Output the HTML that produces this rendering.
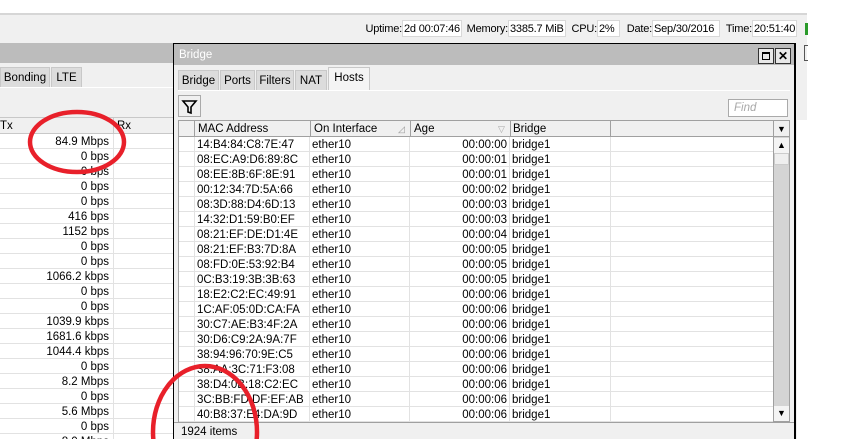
<!DOCTYPE html>
<html><head><meta charset="utf-8"><style>
*{margin:0;padding:0;box-sizing:border-box}
html,body{width:849px;height:439px;overflow:hidden}
body{background:#fff;font-family:"Liberation Sans",Tahoma,sans-serif;font-size:11.5px;color:#000;position:relative}
.a{position:absolute}
.box{position:absolute;top:20px;height:17px;background:#fff;border:1px solid #d8d8d8;padding:1px 1px;line-height:15px;white-space:nowrap;font-size:11px;letter-spacing:-0.2px;overflow:hidden}
.lbl{position:absolute;top:22px;line-height:15px;text-align:right;white-space:nowrap;font-size:11px;letter-spacing:-0.2px}
.tab{position:absolute;height:20px;background:#dcdcdc;border:1px solid #c8c8c8;border-bottom:none;line-height:20px;text-align:center}
.row{position:absolute;height:15px;border-bottom:1px solid #e2e2e2;line-height:16px;white-space:nowrap}
.c{position:absolute;top:0;height:15px;border-right:1px solid #e2e2e2}
</style></head><body>
<div class="a" style="left:0;top:13px;width:807px;height:426px;background:#f0f0f0;border-top:2px solid #d6d6d6"></div>
<div class="lbl" style="right:447px">Uptime:</div><div class="box" style="left:402px;width:60px">2d 00:07:46</div>
<div class="lbl" style="right:341px">Memory:</div><div class="box" style="left:508px;width:58px">3385.7 MiB</div>
<div class="lbl" style="right:252px">CPU:</div><div class="box" style="left:597px;width:23px">2%</div>
<div class="lbl" style="right:197px">Date:</div><div class="box" style="left:652px;width:68px">Sep/30/2016</div>
<div class="lbl" style="right:97px">Time:</div><div class="box" style="left:752px;width:45px">20:51:40</div>
<div class="a" style="left:805px;top:23px;width:3px;height:12px;background:#2a9a2a"></div>
<div class="a" style="left:0;top:43px;width:173px;height:20px;background:#bcbcbc"></div>
<div class="tab" style="left:0;top:67px;width:50px">Bonding</div>
<div class="tab" style="left:51px;top:67px;width:31px">LTE</div>
<div class="a" style="left:0;top:87px;width:173px;height:1px;background:#fff"></div>
<div class="a" style="left:0;top:117px;width:173px;height:17px;background:#f0f0f0;border-top:1px solid #c8c8c8;border-bottom:1px solid #c8c8c8;line-height:16px"><span class="a" style="left:0">Tx</span><span class="a" style="left:113px;top:0;height:15px;border-left:1px solid #c8c8c8;padding-left:3px">Rx</span></div>
<div class="a" style="left:0;top:134px;width:173px;height:305px;background:#fff;overflow:hidden"><div class="a" id="lt" style="left:0;top:0;width:173px"></div></div>
<div class="a" style="left:797px;top:43px;width:10px;height:396px;background:#f0f0f0"></div>
<div class="a" style="left:804px;top:45px;width:4px;height:16px;border:1px solid #555;border-right:none"></div>
<div class="a" style="left:797px;top:120px;width:10px;height:319px;background:#fff"></div>
<div class="a" style="left:173px;top:43px;width:623px;height:396px;background:#f0f0f0;border-left:1px solid #000;border-top:1px solid #000;border-right:2px solid #000"></div>
<div class="a" style="left:174px;top:44px;width:620px;height:21px;background:#bcbcbc;color:#fff;line-height:22px;padding-left:5px">Bridge</div>
<div class="a" style="left:758px;top:48px;width:16px;height:16px;border:1px solid #333;background:#e8e8e8"><div class="a" style="left:3px;top:3px;width:8px;height:8px;border:1px solid #000;border-top-width:2px"></div></div>
<div class="a" style="left:775px;top:48px;width:16px;height:16px;border:1px solid #333;background:#e8e8e8;font-weight:bold;font-size:12px;line-height:14px;text-align:center">✕</div>
<div class="tab" style="left:178px;top:70px;width:41px">Bridge</div>
<div class="tab" style="left:220px;top:70px;width:35px">Ports</div>
<div class="tab" style="left:256px;top:70px;width:38px">Filters</div>
<div class="tab" style="left:295px;top:70px;width:32px">NAT</div>
<div class="tab" style="left:328px;top:67px;width:42px;height:23px;background:#f4f4f4;line-height:21px">Hosts</div>
<div class="a" style="left:178px;top:90px;width:612px;height:1px;background:#fff"></div>
<div class="a" style="left:178px;top:95px;width:23px;height:22px;border:1px solid #aaa;background:#f0f0f0">
<svg width="21" height="20" viewBox="0 0 21 20"><path d="M4 5h13l-5 6v6l-3-1v-5z" fill="none" stroke="#000" stroke-width="1.6"/></svg></div>
<div class="a" style="left:728px;top:99px;width:60px;height:18px;border:1px solid #aaa;background:#fff;color:#a8a8a8;font-style:italic;padding-left:5px;line-height:17px">Find</div>
<div class="a" style="left:178px;top:120px;width:612px;height:302px;background:#fff;border:1px solid #a0a0a0"></div>
<div class="a" style="left:179px;top:121px;width:594px;height:16px;background:#f0f0f0;border-bottom:1px solid #a0a0a0;line-height:17px">
<span class="a" style="left:15px;top:0;height:16px;border-left:1px solid #a0a0a0;padding-left:3px;width:116px">MAC Address</span>
<span class="a" style="left:131px;top:0;height:16px;border-left:1px solid #a0a0a0;padding-left:3px;width:100px">On Interface<span class="a" style="left:87px;color:#999;font-size:9px">◿</span></span>
<span class="a" style="left:231px;top:0;height:16px;border-left:1px solid #a0a0a0;padding-left:3px;width:100px">Age<span class="a" style="left:87px;color:#aaa;font-size:9px">▽</span></span>
<span class="a" style="left:331px;top:0;height:16px;border-left:1px solid #a0a0a0;padding-left:2px;width:100px">Bridge</span>
<span class="a" style="left:431px;top:0;height:16px;border-left:1px solid #a0a0a0;width:1px"></span>
</div>
<div class="a" style="left:773px;top:121px;width:16px;height:16px;background:#f0f0f0;border-left:1px solid #a0a0a0;border-bottom:1px solid #a0a0a0;text-align:center;font-size:9px;line-height:16px">▼</div>
<div class="a" style="left:773px;top:137px;width:16px;height:284px;background:#d4d4d4;border-left:1px solid #a0a0a0"></div>
<div class="a" style="left:774px;top:138px;width:15px;height:15px;background:#f4f4f4;text-align:center;font-size:9px;line-height:15px">▲</div>
<div class="a" style="left:774px;top:153px;width:15px;height:12px;background:#efefef;border:1px solid #ccc"></div>
<div class="a" style="left:774px;top:406px;width:15px;height:15px;background:#f4f4f4;text-align:center;font-size:9px;line-height:15px">▼</div>
<div class="a" id="ht" style="left:179px;top:137px;width:594px"></div>
<div class="a" style="left:174px;top:422px;width:620px;height:17px;border-top:1px solid #a0a0a0;padding-left:7px;line-height:19px">1924 items</div>
<div class="a" style="left:0;top:0;width:849px;height:439px;overflow:hidden"><svg width="849" height="439" style="display:block;overflow:hidden"><path d="M30 142a47 30 0 1 0 94 0a47 30 0 1 0 -94 0" fill="none" stroke="#e8202a" stroke-width="4.5"/><path d="M153 432a52 66 0 1 1 104 0a52 66 0 1 1 -104 0" fill="none" stroke="#e8202a" stroke-width="4.5"/></svg></div>
<script>
var L=["84.9 Mbps","0 bps","0 bps","0 bps","0 bps","416 bps","1152 bps","0 bps","0 bps","1066.2 kbps","0 bps","0 bps","1039.9 kbps","1681.6 kbps","1044.4 kbps","0 bps","8.2 Mbps","0 bps","5.6 Mbps","0 bps","8.0 Mbps"],h="";
L.forEach(function(v,i){h+='<div class="row" style="left:0;top:'+(i*15)+'px;width:173px"><div class="c" style="left:0;width:114px;text-align:right;padding-right:4px">'+v+'</div></div>'});
document.getElementById("lt").innerHTML=h;
var M=["14:B4:84:C8:7E:47","08:EC:A9:D6:89:8C","08:EE:8B:6F:8E:91","00:12:34:7D:5A:66","08:3D:88:D4:6D:13","14:32:D1:59:B0:EF","08:21:EF:DE:D1:4E","08:21:EF:B3:7D:8A","08:FD:0E:53:92:B4","0C:B3:19:3B:3B:63","18:E2:C2:EC:49:91","1C:AF:05:0D:CA:FA","30:C7:AE:B3:4F:2A","30:D6:C9:2A:9A:7F","38:94:96:70:9E:C5","38:AA:3C:71:F3:08","38:D4:0B:18:C2:EC","3C:BB:FD:DF:EF:AB","40:B8:37:E4:DA:9D"],A=["00","01","01","02","03","03","04","05","05","05","06","06","06","06","06","06","06","06","06"];h="";
M.forEach(function(v,i){h+='<div class="row" style="left:0;top:'+(i*15)+'px;width:594px"><div class="c" style="left:0;width:16px"></div><div class="c" style="left:16px;width:115px;padding-left:2px">'+v+'</div><div class="c" style="left:131px;width:100px;padding-left:2px">ether10</div><div class="c" style="left:231px;width:100px;text-align:right;padding-right:2px">00:00:'+A[i]+'</div><div class="c" style="left:331px;width:101px;padding-left:2px">bridge1</div></div>'});
document.getElementById("ht").innerHTML=h;
</script>
</body></html>
